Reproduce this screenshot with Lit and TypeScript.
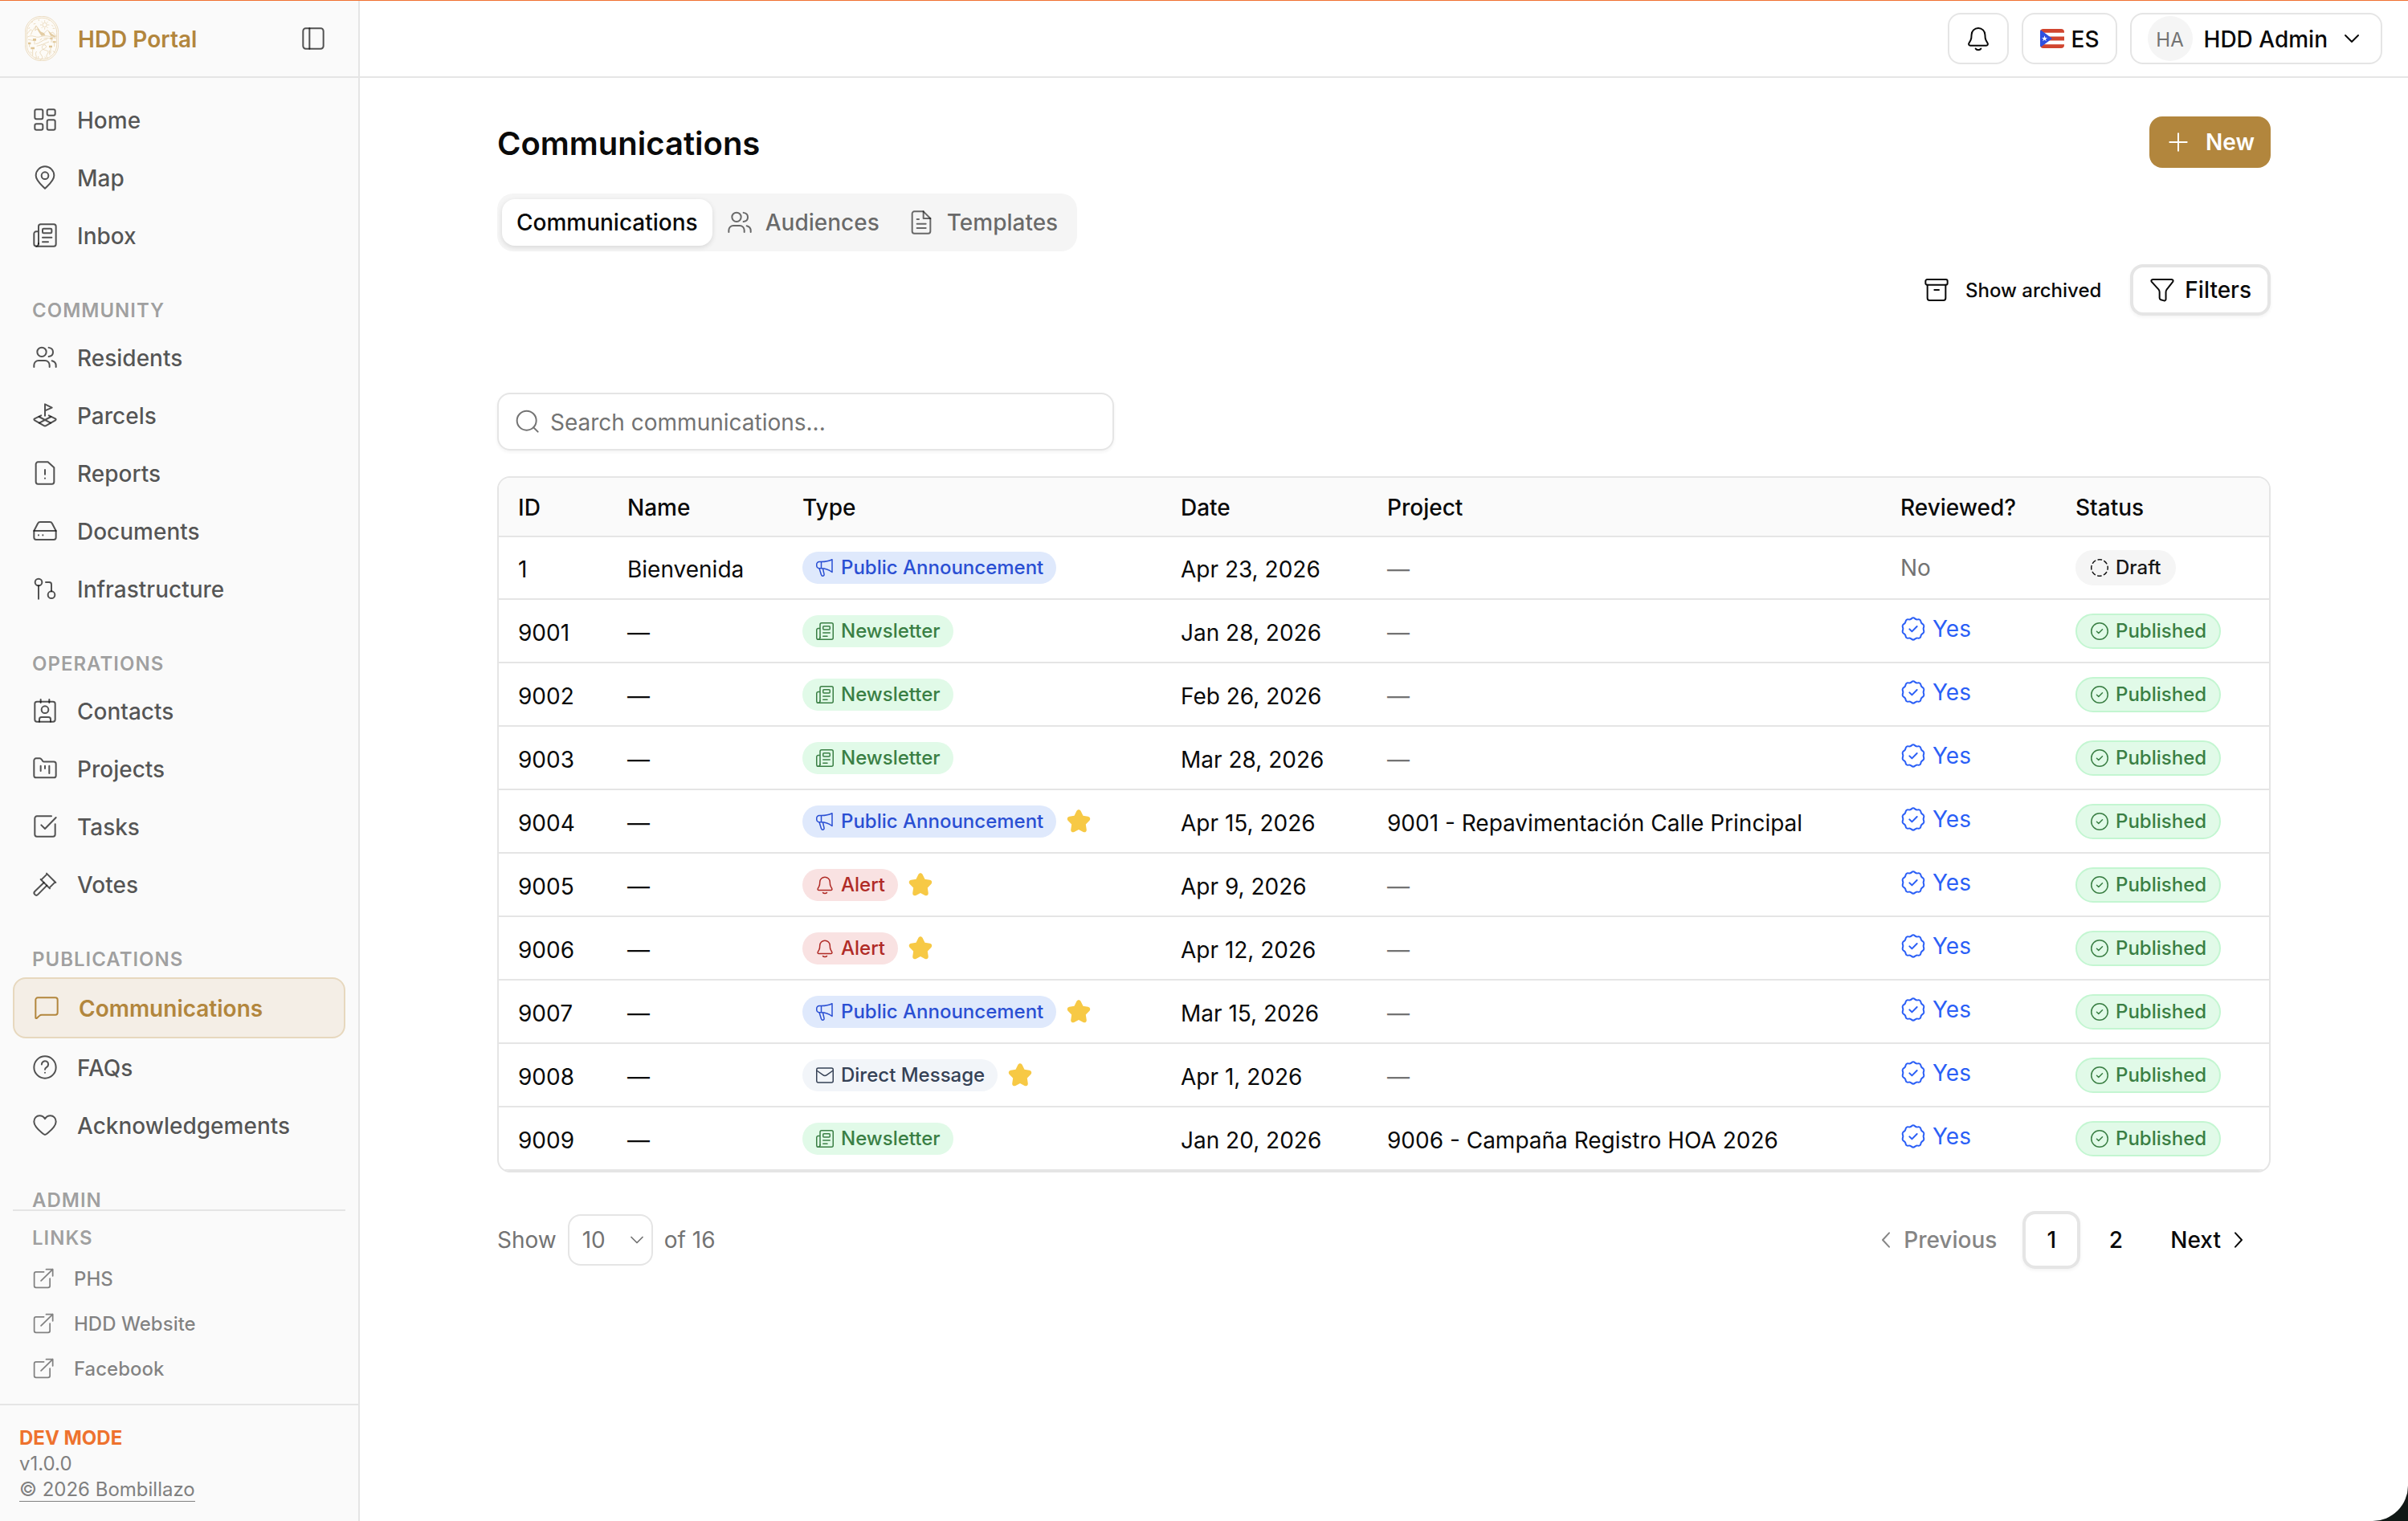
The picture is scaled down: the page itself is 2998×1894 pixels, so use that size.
import { LitElement, html, css, svg, nothing } from "lit";
import type { SVGTemplateResult } from "lit";
import { customElement, property } from "lit/decorators.js";
import { classMap } from "lit/directives/class-map.js";

const ICONS: Record<string, SVGTemplateResult> = {
  panel: svg`<rect x="2.5" y="2.5" width="19" height="19" rx="2.5"/><path d="M8.5 2.5v19"/>`,
  home: svg`<rect x="2.5" y="2.5" width="7.5" height="9" rx="1.5"/><rect x="14" y="2.5" width="7.5" height="5.5" rx="1.5"/><rect x="2.5" y="16" width="7.5" height="5.5" rx="1.5"/><rect x="14" y="12.25" width="7.5" height="9.25" rx="1.5"/>`,
  map: svg`<path d="M20.5 10.2c0 5-5.5 9-8.5 12.1-3-3.100-8.500-7.100-8.500-12.100a8.500 8.500 0 0 1 17 0z"/><circle cx="12" cy="10.250" r="3.250"/>`,
  news: svg`<path d="M6 20V3.750a2 2 0 0 1 2-2h12.250a2 2 0 0 1 2 2v16.500a2 2 0 0 1-2 2H3.875A2.125 2.125 0 0 1 1.750 20.125V10.500a2 2 0 0 1 2-2H6"/><path d="M6 19.500c0 1.500-.8 2.750-2.100 2.750"/><rect x="9.750" y="5.750" width="8.500" height="4.250" rx="1"/><path d="M9.750 14h8.500M9.750 18.250H15"/>`,
  users: svg`<circle cx="9" cy="7" r="4.250"/><path d="M1.750 21v-1.750a4.250 4.250 0 0 1 4.250-4.250h6a4.250 4.250 0 0 1 4.250 4.250V21"/><path d="M15.500 2.900c2.300.3 4 2 4 4.200s-1.700 3.900-4 4.200M18.500 15.250c2.200.5 3.750 2.250 3.750 4.500V21"/>`,
  parcel: svg`<path d="M12 12.500V1.750l6.500 3.200L12 7.800"/><path d="M8.400 12.300 2.300 15.300c-.7.4-.7 1 0 1.400l8.500 5c.9.5 1.500.5 2.400 0l8.500-5c.7-.4.7-1 0-1.400l-6.100-3"/><path d="M6.500 13.500l10.800 5.700M17.500 13.500 6.700 19.200"/>`,
  report: svg`<path d="M5.500 1.750h9.250L20.500 7v13.250a2 2 0 0 1-2 2h-13a2 2 0 0 1-2-2V3.750a2 2 0 0 1 2-2z"/><path d="M12 9v4.250M12 16.900v.1"/>`,
  drive: svg`<path d="M1.750 12l3.500-6.800c.5-1 1.100-1.450 2.250-1.450h9c1.150 0 1.750.45 2.250 1.450L22.250 12"/><path d="M1.750 12h20.500v6.250a2 2 0 0 1-2 2H3.750a2 2 0 0 1-2-2z"/><path d="M6 16v.1M10 16v.1"/>`,
  branch: svg`<circle cx="6" cy="6" r="3.250"/><path d="M6 9.250V21.500"/><circle cx="18" cy="17.750" r="3.250"/><path d="M18 14.500V8a2 2 0 0 0-2-2h-3.250"/>`,
  contact: svg`<rect x="2.500" y="3.500" width="19" height="18.750" rx="2"/><path d="M8 1.500v3M16 1.500v3"/><circle cx="12" cy="11" r="3.250"/><path d="M6.750 22.250V20a2 2 0 0 1 2-2h6.500a2 2 0 0 1 2 2v2.250"/>`,
  folder: svg`<path d="M1.750 4.500a2 2 0 0 1 2-2H7c.8 0 1.300.3 1.750.9L10 5.200c.3.400.6.500 1 .500h9.250a2 2 0 0 1 2 2v10.800a2 2 0 0 1-2 2H3.750a2 2 0 0 1-2-2z"/><path d="M8 9.500v4.750M12 9.500V12M16 9.500v7"/>`,
  task: svg`<path d="M18 2.500H4.500a2 2 0 0 0-2 2v15a2 2 0 0 0 2 2h15a2 2 0 0 0 2-2V10"/><path d="M8.500 10.750l3.500 3.500L22.250 3.750"/>`,
  gavel: svg`<path d="M13.500 2l8.500 8.500M16.500 16 8 7.500M14 2.500 8.500 8M21.500 10 16 15.500"/><path d="M11 10.500 2.500 18.750a2 2 0 0 0 2.900 2.900L13.750 13.250"/>`,
  message: svg`<path d="M1.750 21.400V4.500a2 2 0 0 1 2-2h16.500a2 2 0 0 1 2 2v12a2 2 0 0 1-2 2H7.500c-1 0-1.600.3-2.200.9l-2.300 2.200c-.5.4-1.250.2-1.250-.2z"/>`,
  help: svg`<circle cx="12" cy="12" r="10.250"/><path d="M8.900 9.300a3.100 3.100 0 1 1 4.700 2.600c-.9.600-1.600 1.100-1.600 2.100M12 17v.1"/>`,
  heart: svg`<path d="M12 21c-.6 0-1-.3-1.500-.7C7.500 17.700 1.750 13.600 1.750 8.750 1.750 5.500 4 3.200 6.900 3.200c2.300 0 4.100 1.300 5.100 2.900 1-1.600 2.800-2.900 5.100-2.900 2.900 0 5.150 2.300 5.150 5.550 0 4.850-5.750 8.950-8.750 11.550-.5.4-.9.700-1.500.7z"/>`,
  external: svg`<path d="M12.500 5H4.250a2 2 0 0 0-2 2v12.750a2 2 0 0 0 2 2H17a2 2 0 0 0 2-2V12"/><path d="M9.500 14.500 22 2.250M15 2.250h7v7"/>`,
  bell: svg`<path d="M4.800 13.700C5.600 12.300 5.700 10.600 5.700 8.500a6.300 6.300 0 0 1 12.600 0c0 2.100.1 3.800.9 5.200l1.500 2.600c.6 1.100 0 2.200-1.200 2.200h-15c-1.200 0-1.800-1.100-1.200-2.200z"/><path d="M9.500 21.500c.5.700 1.400 1.100 2.500 1.100s2-.4 2.500-1.100"/>`,
  down: svg`<path d="M6 9l6 6 6-6"/>`,
  left: svg`<path d="M15 5.500 9 12l6 6.500"/>`,
  right: svg`<path d="M9 5.500l6 6.500-6 6.500"/>`,
  plus: svg`<path d="M12 4v16M4 12h16"/>`,
  file: svg`<path d="M14 1.750H5.500a2 2 0 0 0-2 2v16.500a2 2 0 0 0 2 2h13a2 2 0 0 0 2-2V8.250z"/><path d="M14 1.750v6.500h6.500M8 9h1.750M8 13.250h8.250M8 17.250h8.250"/>`,
  archive: svg`<rect x="1.750" y="2.250" width="20.500" height="5" rx="1.500"/><path d="M3.500 7.250v12.500a2 2 0 0 0 2 2h13a2 2 0 0 0 2-2V7.250M10 12h4.250"/>`,
  filter: svg`<path d="M3.200 2.250h17.600c1.300 0 1.800 1.200 1.100 2.200l-5.600 7.100c-.7.900-.9 1.500-.9 2.600v6.400c0 1-.8 1.700-1.700 1.500l-3-.9c-.7-.2-1.200-.8-1.200-1.600v-5.400c0-1.100-.2-1.700-.9-2.600L2.100 4.450c-.7-1-.2-2.200 1.100-2.200z"/>`,
  search: svg`<circle cx="11" cy="11" r="9"/><path d="M17.500 17.500 21.500 21.500"/>`,
  megaphone: svg`<path d="M7.500 4.500H5A3.200 3.200 0 0 0 1.750 7.700v1.800A3.200 3.200 0 0 0 5 12.750h2.500c4.500 0 9 1.300 13.500 4.750V1.750C16.500 4 12 4.500 7.500 4.500zM7.500 4.500v8.250"/><path d="M5 12.750l2.400 7.700c.4 1.200 1.200 1.900 2.200 1.700 1.200-.2 1.700-1.200 1.400-2.300L9.500 13"/>`,
  mail: svg`<rect x="1.750" y="3" width="20.500" height="18" rx="2"/><path d="M2.500 6.500l7.200 5.200c1.700 1.200 2.900 1.200 4.600 0l7.200-5.200"/>`,
  star: svg`<path class="solid" d="M10 2.300c.9-1.700 3.100-1.700 4 0l2.100 4.300 4.600.8c2 .4 2.600 2.400 1.200 3.900l-3.300 3.400.7 4.700c.3 2-1.300 3.200-3.100 2.300L12 19.500l-4.200 2.200c-1.800.9-3.400-.3-3.100-2.300l.7-4.700-3.300-3.400C.7 9.800 1.300 7.800 3.300 7.400l4.600-.8z"/>`,
  seal: svg`<path d="M12 1.750c1.250 0 1.800 1.200 2.900 1.500 1.100.3 2.300-.4 3.300.300s.7 2 1.400 2.900c.6.900 1.900 1.200 2.300 2.400.4 1.100-.4 2.100-.4 3.150s.8 2 .4 3.150c-.4 1.200-1.700 1.500-2.300 2.400-.7.900-.4 2.200-1.400 2.900s-2.200 0-3.300.300c-1.100.3-1.650 1.500-2.900 1.500s-1.800-1.200-2.900-1.500c-1.100-.3-2.300.4-3.300-.300s-.7-2-1.400-2.900c-.6-.9-1.900-1.200-2.300-2.400-.4-1.150.4-2.100.4-3.150s-.8-2.050-.4-3.150c.4-1.200 1.700-1.500 2.300-2.400.7-.9.400-2.200 1.400-2.900s2.200 0 3.300-.300c1.100-.3 1.650-1.500 2.900-1.500z"/><path d="M8.500 12.300l2.300 2.200 4.700-4.700"/>`,
  check: svg`<circle cx="12" cy="12" r="10.250"/><path d="M8.500 12.300l2.300 2.200 4.700-4.700"/>`,
  dashed: svg`<circle cx="12" cy="12" r="10.250" stroke-dasharray="4.500 3.550" stroke-dashoffset="2.250"/>`,
};

@customElement("ui-icon")
export class UiIcon extends LitElement {
  @property() name = "";

  static styles = css`
    :host { display: block; flex: none; width: 32px; height: 32px; }
    svg { display: block; width: 100%; height: 100%; fill: none; stroke: currentColor; stroke-width: 1.5; stroke-linecap: round; stroke-linejoin: round; overflow: visible; }
    .solid { fill: currentColor; stroke: none; }
  `;

  render() {
    return html`<svg viewBox="0 0 24 24" aria-hidden="true">${ICONS[this.name]}</svg>`;
  }
}

const FONT = css`
  * { box-sizing: border-box; }
  a { color: inherit; text-decoration: none; }
  button, input, select { font: inherit; color: inherit; margin: 0; }
  button { background: none; border: 0; padding: 0; display: flex; align-items: center; cursor: pointer; white-space: nowrap; }
`;

interface NavItem { label: string; icon: string; active?: boolean }

const SECTIONS: { title?: string; items: NavItem[] }[] = [
  { items: [
    { label: "Home", icon: "home" },
    { label: "Map", icon: "map" },
    { label: "Inbox", icon: "news" },
  ] },
  { title: "Community", items: [
    { label: "Residents", icon: "users" },
    { label: "Parcels", icon: "parcel" },
    { label: "Reports", icon: "report" },
    { label: "Documents", icon: "drive" },
    { label: "Infrastructure", icon: "branch" },
  ] },
  { title: "Operations", items: [
    { label: "Contacts", icon: "contact" },
    { label: "Projects", icon: "folder" },
    { label: "Tasks", icon: "task" },
    { label: "Votes", icon: "gavel" },
  ] },
  { title: "Publications", items: [
    { label: "Communications", icon: "message", active: true },
    { label: "FAQs", icon: "help" },
    { label: "Acknowledgements", icon: "heart" },
  ] },
  { title: "Admin", items: [] },
];

const LINKS = ["PHS", "HDD Website", "Facebook"];

@customElement("portal-sidebar")
export class PortalSidebar extends LitElement {
  static styles = [FONT, css`
    :host { display: flex; flex-direction: column; min-height: 0; background: #fafafa; border-right: 2px solid #e5e5e5; color: rgba(10, 10, 10, 0.7); }
    .brand { flex: none; height: 96px; display: flex; align-items: center; gap: 24px; padding: 0 40px 0 31px; border-bottom: 2px solid #e5e5e5; }
    .logo { display: block; width: 42px; height: 56px; }
    .name { flex: 1; padding-top: 2px; font-size: 28px; font-weight: 600; color: #b2863d; }
    nav { flex: 1; min-height: 0; overflow-y: auto; scrollbar-width: none; padding: 16px; }
    .title { margin: 0; height: 48px; padding: 2px 24px 0; font-size: 24px; line-height: 48px; font-weight: 600; letter-spacing: 1px; text-transform: uppercase; color: rgba(10, 10, 10, 0.4); }
    nav .title { margin-top: 32px; }
    .item { display: flex; align-items: center; gap: 24px; height: 72px; padding: 0 24px; font-size: 28px; font-weight: 500; }
    .item span { padding-top: 2px; }
    .item.active { height: 76px; border: 2px solid #e7d8be; border-radius: 16px; background: #f4eee6; color: #b2863d; font-weight: 600; }
    .links { flex: none; margin: 0 16px; padding: 8px 0 16px; border-top: 2px solid #e5e5e5; }
    .link { display: flex; align-items: center; gap: 24px; height: 56px; padding: 0 24px; font-size: 24px; font-weight: 500; color: rgba(10, 10, 10, 0.5); }
    .link ui-icon { width: 28px; height: 28px; }
    footer { flex: none; padding: 25px 24px 23px; border-top: 2px solid #e5e5e5; font-size: 24px; line-height: 32px; color: #808080; }
    footer p { margin: 0; }
    footer .mode { font-weight: 700; color: #ee722e; }
    footer a { border-bottom: 1px solid #808080; }
  `];

  private logo() {
    return html`<svg class="logo" viewBox="0 0 126 168" fill="none" stroke="#e2ccA4" stroke-width="2" role="img" aria-label="HDD">
      <rect x="1" y="1" width="124" height="166" rx="60" fill="#fdfbf7"/>
      <rect x="7" y="7" width="112" height="154" rx="54"/>
      <circle cx="74" cy="33" r="8"/>
      <path d="M74 16v6M74 44v6M57 33h6M85 33h6M62 21l4 4M82 41l4 4M86 21l-4 4M66 41l-4 4"/>
      <path d="M8 66 22 50l6 6 14-20 16 22 12 14M66 70l18-18 12 12 8-4 14 16M28 56l-6 14M42 36l-4 18 8-6 6 10"/>
      <path d="M44 38l14 20 14 6 4 8-14 2-10-14zM86 54l14 12 16 10-2 4-18-6z" fill="#e3cda5" stroke="none"/>
      <path d="M10 78c18-10 30 4 44 0s30-8 62 6M12 88c10 0 18 6 30 2M70 84c12-4 24-2 34 6M40 104c14 0 24-16 44-18M44 112c20-4 30-10 46-16"/>
      <path d="M58 164c20-12-8-22 0-32s28-12 20-22-20 8-10 14 24 4 18 14-8 12 0 20M40 160c8-10-6-18 4-28M94 146c-6-6 2-12-4-18" />
      <path d="M30 84h12v8H30zM12 98h10v8H12zM22 116h14v8H22zM94 80h10v6H94zM104 94h12v6h-12zM90 110h12v8H90z" fill="#dfc595" stroke="none"/>
      <path d="M36 92v14M17 106v10M29 124v24M99 86v12M110 100v14M96 118v22M20 134l6 4M104 130l8 6M56 90l8-6M50 150v8M74 152l4 6" />
      <path d="M24 24l6-4M32 30l8-2M100 34l6 4M104 46h8M18 42l-4 6M52 12v6M88 14l4 4" />
    </svg>`;
  }

  render() {
    return html`
      <div class="brand">
        ${this.logo()}
        <span class="name">HDD Portal</span>
        <button aria-label="Toggle sidebar"><ui-icon name="panel"></ui-icon></button>
      </div>
      <nav>
        ${SECTIONS.map((s) => html`
          ${s.title ? html`<h2 class="title">${s.title}</h2>` : nothing}
          ${s.items.map((i) => html`
            <a href="#" class=${classMap({ item: true, active: !!i.active })}>
              <ui-icon name=${i.icon}></ui-icon><span>${i.label}</span>
            </a>`)}
        `)}
      </nav>
      <div class="links">
        <h2 class="title">Links</h2>
        ${LINKS.map((l) => html`<a class="link" href="#"><ui-icon name="external"></ui-icon><span>${l}</span></a>`)}
      </div>
      <footer>
        <p class="mode">DEV MODE</p>
        <p>v1.0.0</p>
        <p><a href="#">© 2026 Bombillazo</a></p>
      </footer>
    `;
  }
}

@customElement("portal-header")
export class PortalHeader extends LitElement {
  static styles = [FONT, css`
    :host { display: flex; align-items: center; justify-content: flex-end; gap: 16px; height: 96px; padding: 0 32px; border-bottom: 2px solid #e5e5e5; font-size: 28px; font-weight: 500; }
    button { height: 64px; padding: 0 20px; border: 2px solid #e5e5e5; border-radius: 16px; }
    button span { padding-top: 2px; }
    .lang { gap: 8px; }
    .user { gap: 14px; }
    .flag { display: block; width: 32px; height: 24px; }
    .avatar { display: grid; place-items: center; width: 56px; height: 56px; border-radius: 50%; background: #f5f5f5; color: #737373; font-size: 24px; font-weight: 400; }
  `];

  render() {
    return html`
      <button aria-label="Notifications"><ui-icon name="bell"></ui-icon></button>
      <button class="lang">
        <svg class="flag" viewBox="0 0 32 24" aria-hidden="true">
          <clipPath id="c"><rect x="1" width="30" height="24" rx="4"/></clipPath>
          <g clip-path="url(#c)">
            <path fill="#fff" d="M0 0h32v24H0z"/>
            <path fill="#d1452f" d="M0 0h32v4.800H0zM0 9.600h32v4.800H0zM0 19.200h32V24H0z"/>
            <path fill="#2f50e0" d="M0 0l16 12L0 24z"/>
            <path fill="#fff" d="M6.500 8.200l.9 2.700h2.800l-2.300 1.700.9 2.700-2.300-1.700-2.300 1.700.9-2.700-2.300-1.700h2.800z"/>
          </g>
        </svg>
        <span>ES</span>
      </button>
      <button class="user">
        <span class="avatar">HA</span>
        <span>HDD Admin</span>
        <ui-icon name="down"></ui-icon>
      </button>
    `;
  }
}

type Kind = "announcement" | "newsletter" | "alert" | "direct";

const KINDS: Record<Kind, { label: string; icon: string }> = {
  announcement: { label: "Public Announcement", icon: "megaphone" },
  newsletter: { label: "Newsletter", icon: "news" },
  alert: { label: "Alert", icon: "bell" },
  direct: { label: "Direct Message", icon: "mail" },
};

interface Row { id: string; name?: string; kind: Kind; star?: boolean; date: string; project?: string; draft?: boolean }

const ROWS: Row[] = [
  { id: "1", name: "Bienvenida", kind: "announcement", date: "Apr 23, 2026", draft: true },
  { id: "9001", kind: "newsletter", date: "Jan 28, 2026" },
  { id: "9002", kind: "newsletter", date: "Feb 26, 2026" },
  { id: "9003", kind: "newsletter", date: "Mar 28, 2026" },
  { id: "9004", kind: "announcement", star: true, date: "Apr 15, 2026", project: "9001 - Repavimentación Calle Principal" },
  { id: "9005", kind: "alert", star: true, date: "Apr 9, 2026" },
  { id: "9006", kind: "alert", star: true, date: "Apr 12, 2026" },
  { id: "9007", kind: "announcement", star: true, date: "Mar 15, 2026" },
  { id: "9008", kind: "direct", star: true, date: "Apr 1, 2026" },
  { id: "9009", kind: "newsletter", date: "Jan 20, 2026", project: "9006 - Campaña Registro HOA 2026" },
];

@customElement("communications-table")
export class CommunicationsTable extends LitElement {
  static styles = [FONT, css`
    :host { display: block; border: 2px solid #e5e5e5; border-radius: 16px; overflow: hidden; font-size: 28px; }
    table { width: 100%; table-layout: fixed; border-collapse: separate; border-spacing: 0; text-align: left; }
    .id { width: 136px; }
    .name { width: 218px; }
    .type { width: 471px; }
    .date { width: 257px; }
    .reviewed { width: 218px; }
    .status { width: 265px; }
    th { height: 74px; padding: 2px 24px 0; background: #fafafa; border-bottom: 2px solid #e5e5e5; font-weight: 500; }
    td { padding: 16px 24px; border-bottom: 2px solid #e5e5e5; line-height: 40px; white-space: nowrap; }
    .text { padding: 18px 24px 14px; }
    .cell { display: flex; align-items: center; gap: 12px; }
    .muted { color: #737373; }
    .chip { display: flex; align-items: center; gap: 8px; height: 40px; padding: 0 16px; border-radius: 20px; font-size: 24px; font-weight: 500; }
    .chip ui-icon { width: 24px; height: 24px; }
    .announcement { background: #dfe9fc; color: #2a4fd3; }
    .newsletter { background: #e1fae8; color: #3a7f44; }
    .alert { background: #f9e2e2; color: #b02b26; }
    .direct { background: #f2f5f9; color: #354155; }
    .star { color: #f7c945; }
    .yes { display: flex; align-items: center; gap: 8px; height: 40px; margin-bottom: 5px; color: #2b5ff6; }
    .state { height: 44px; border: 2px solid #f5f5f5; border-radius: 22px; background: #f5f5f5; color: #171717; }
    .state.published { border-color: #c3f6d1; background: #e1fae8; color: #3a7f44; }
  `];

  render() {
    return html`
      <table>
        <colgroup>
          <col class="id"><col class="name"><col class="type"><col class="date"><col><col class="reviewed"><col class="status">
        </colgroup>
        <thead>
          <tr>${["ID", "Name", "Type", "Date", "Project", "Reviewed?", "Status"].map((h) => html`<th scope="col">${h}</th>`)}</tr>
        </thead>
        <tbody>
          ${ROWS.map((r) => html`
            <tr>
              <td class="text">${r.id}</td>
              <td class="text">${r.name ?? "—"}</td>
              <td>
                <div class="cell">
                  <span class="chip ${r.kind}"><ui-icon name=${KINDS[r.kind].icon}></ui-icon>${KINDS[r.kind].label}</span>
                  ${r.star ? html`<ui-icon class="star" name="star"></ui-icon>` : nothing}
                </div>
              </td>
              <td class="text">${r.date}</td>
              <td class=${classMap({ text: true, muted: !r.project })}>${r.project ?? "—"}</td>
              <td>${r.draft
                ? html`<span class="muted">No</span>`
                : html`<span class="yes"><ui-icon name="seal"></ui-icon>Yes</span>`}</td>
              <td>
                <div class="cell">
                  <span class=${classMap({ chip: true, state: true, published: !r.draft })}>
                    <ui-icon name=${r.draft ? "dashed" : "check"}></ui-icon>${r.draft ? "Draft" : "Published"}
                  </span>
                </div>
              </td>
            </tr>`)}
        </tbody>
      </table>
    `;
  }
}

@customElement("app-root")
export class AppRoot extends LitElement {
  static styles = [FONT, css`
    :host { display: block; background: #101815; color: #0a0a0a; font-family: Inter, "Liberation Sans", sans-serif; }
    .shell { display: grid; grid-template-columns: 448px minmax(0, 1fr); height: 100vh; border-top: 1px solid #f07131; border-bottom-right-radius: 44px; background: #fff; overflow: hidden; }
    .main { min-height: 0; overflow-y: auto; scrollbar-width: none; }
    .content { max-width: 2304px; margin: 0 auto; padding: 48px; font-size: 28px; }
    .heading { display: flex; align-items: center; justify-content: space-between; height: 64px; margin-bottom: 32px; }
    h1 { margin: 0; padding-top: 2px; font-size: 40px; font-weight: 600; }
    .new { gap: 18px; height: 64px; padding: 0 20px; border-radius: 16px; background: #b2863d; color: #fff; font-weight: 600; }
    .tabs { display: flex; align-items: center; width: max-content; height: 72px; padding: 0 6px; border-radius: 20px; background: #f5f5f5; }
    .tab { gap: 16px; height: 58px; padding: 0 18px; border-radius: 16px; font-weight: 500; color: rgba(10, 10, 10, 0.6); }
    .tab.active { background: #fff; color: #0a0a0a; box-shadow: 0 2px 6px rgba(0, 0, 0, 0.12); }
    .tools { display: flex; justify-content: flex-end; gap: 16px; margin: 16px 0 96px; font-weight: 500; }
    .archived { gap: 20px; height: 64px; padding: 0 20px; font-size: 24px; }
    .filters { gap: 12px; height: 64px; padding: 0 20px; border: 4px solid #e5e5e5; border-radius: 16px; box-shadow: 0 2px 4px rgba(0, 0, 0, 0.05); }
    .search { display: flex; align-items: center; gap: 12px; width: 768px; max-width: 100%; height: 72px; margin-bottom: 32px; padding: 0 20px; border: 2px solid #e5e5e5; border-radius: 16px; color: #737373; box-shadow: 0 2px 4px rgba(0, 0, 0, 0.05); }
    .search input { flex: 1; min-width: 0; height: 60px; padding: 2px 0 0; border: 0; outline: 0; background: none; color: #0a0a0a; }
    .search input::placeholder { color: #737373; opacity: 1; }
    .pager { display: flex; align-items: center; justify-content: space-between; margin-top: 48px; }
    .size { display: flex; align-items: center; gap: 14px; color: #737373; }
    .select { display: grid; align-items: center; width: 106px; height: 64px; }
    .select select, .select ui-icon { grid-area: 1 / 1; }
    .select select { appearance: none; width: 100%; height: 100%; padding: 0 16px; border: 2px solid #e5e5e5; border-radius: 16px; background: none; }
    .select ui-icon { justify-self: end; width: 28px; height: 28px; margin-right: 6px; pointer-events: none; }
    .pages { display: flex; align-items: center; gap: 8px; font-weight: 500; }
    .page { justify-content: center; width: 72px; height: 72px; border-radius: 16px; }
    .page.current { border: 4px solid #e5e5e5; box-shadow: 0 2px 4px rgba(0, 0, 0, 0.05); }
    .step { gap: 6px; height: 72px; padding: 0 24px; }
    .step:disabled { color: #858585; }
  `];

  render() {
    return html`
      <div class="shell">
        <portal-sidebar></portal-sidebar>
        <div class="main">
          <portal-header></portal-header>
          <main class="content">
            <div class="heading">
              <h1>Communications</h1>
              <button class="new"><ui-icon name="plus"></ui-icon>New</button>
            </div>
            <div class="tabs" role="tablist">
              <button class="tab active" role="tab" aria-selected="true">Communications</button>
              <button class="tab" role="tab" aria-selected="false"><ui-icon name="users"></ui-icon>Audiences</button>
              <button class="tab" role="tab" aria-selected="false"><ui-icon name="file"></ui-icon>Templates</button>
            </div>
            <div class="tools">
              <button class="archived"><ui-icon name="archive"></ui-icon>Show archived</button>
              <button class="filters"><ui-icon name="filter"></ui-icon>Filters</button>
            </div>
            <label class="search">
              <ui-icon name="search"></ui-icon>
              <input type="search" aria-label="Search communications" placeholder="Search communications...">
            </label>
            <communications-table></communications-table>
            <div class="pager">
              <div class="size">
                <label for="size">Show</label>
                <div class="select">
                  <select id="size"><option>10</option></select>
                  <ui-icon name="down"></ui-icon>
                </div>
                <span>of 16</span>
              </div>
              <div class="pages">
                <button class="step" disabled><ui-icon name="left"></ui-icon>Previous</button>
                <button class="page current" aria-current="page">1</button>
                <button class="page">2</button>
                <button class="step">Next<ui-icon name="right"></ui-icon></button>
              </div>
            </div>
          </main>
        </div>
      </div>
    `;
  }
}
